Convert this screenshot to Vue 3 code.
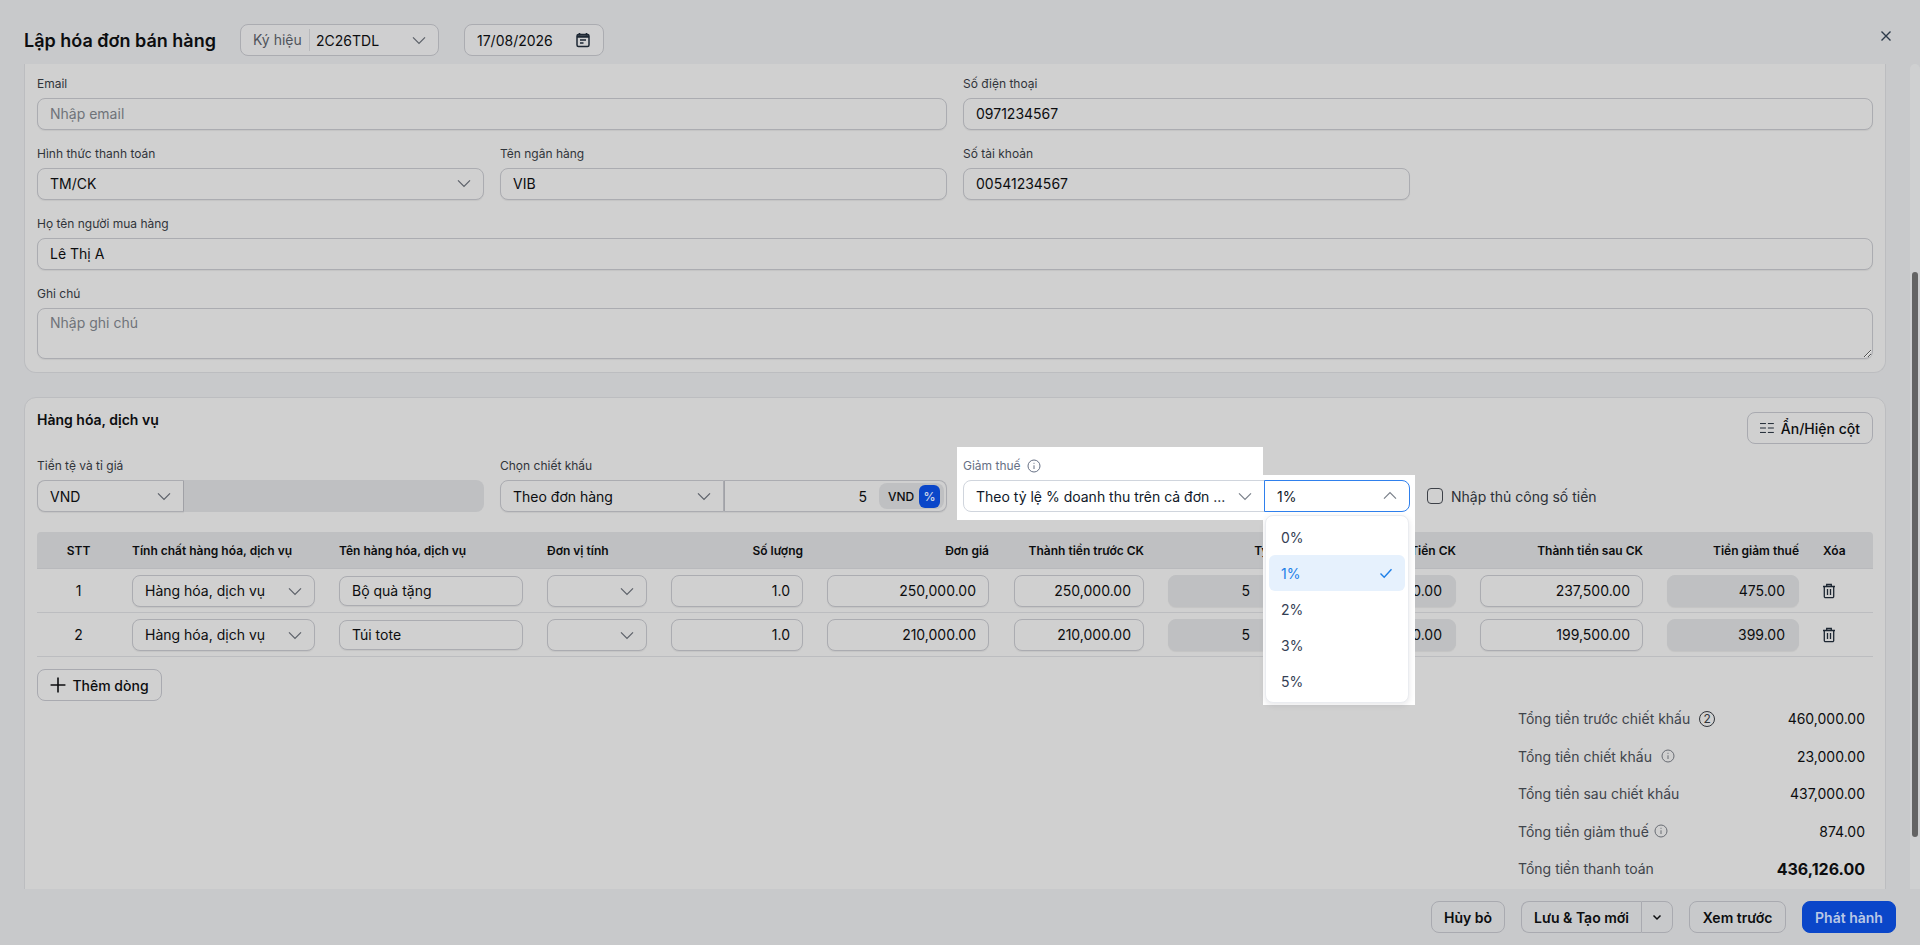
<script setup>
const rows = [
  { id: 1, name: "Bộ quà tặng", qty: "1.0", price: "250,000.00", before: "250,000.00", rate: "5", discount: "12,500.00", after: "237,500.00", tax: "475.00" },
  { id: 2, name: "Túi tote", qty: "1.0", price: "210,000.00", before: "210,000.00", rate: "5", discount: "10,500.00", after: "199,500.00", tax: "399.00" },
];

const options = ["0%", "1%", "2%", "3%", "5%"];
</script>

<template>
  <div class="page">
    <header class="top">
      <h1 class="title">Lập hóa đơn bán hàng</h1>
      <div class="symbol">
        <span class="symbol-label">Ký hiệu</span>
        <span class="symbol-value">2C26TDL</span>
        <svg class="chev" viewBox="0 0 12 12"><path d="M1.5 4l4.5 4.500L10.500 4" /></svg>
      </div>
      <div class="date">
        <span>17/08/2026</span>
        <svg class="calendar" viewBox="0 0 16 16">
          <path d="M4.5 1v2.500M11.500 1v2.500" stroke-width="1.6" />
          <rect x="2" y="2.5" width="12" height="12" rx="1.5" stroke-width="1.5" />
          <path d="M2 4.500h12" stroke-width="2.5" />
          <path d="M5 8h6M5 11h3.500" stroke-width="1.3" />
        </svg>
      </div>
      <svg class="close" viewBox="0 0 20 20"><path d="M5.500 5.500l9 9M14.500 5.500l-9 9" /></svg>
    </header>

    <div class="body">
      <main class="main">
        <section class="card first">
          <div class="form-grid">
            <div class="field span2">
              <label>Email</label>
              <input class="ctl" placeholder="Nhập email" />
            </div>
            <div class="field span2">
              <label>Số điện thoại</label>
              <input class="ctl" value="0971234567" />
            </div>
            <div class="field">
              <label>Hình thức thanh toán</label>
              <div class="ctl select">
                <span>TM/CK</span>
                <svg class="chev" viewBox="0 0 12 12"><path d="M1.500 4l4.500 4.500L10.500 4" /></svg>
              </div>
            </div>
            <div class="field">
              <label>Tên ngân hàng</label>
              <input class="ctl" value="VIB" />
            </div>
            <div class="field">
              <label>Số tài khoản</label>
              <input class="ctl" value="00541234567" />
            </div>
            <div class="blank"></div>
            <div class="field span4">
              <label>Họ tên người mua hàng</label>
              <input class="ctl" value="Lê Thị A" />
            </div>
            <div class="field span4">
              <label>Ghi chú</label>
              <textarea class="ctl note" placeholder="Nhập ghi chú"></textarea>
            </div>
          </div>
        </section>

        <section class="card second">
          <div class="card-head">
            <h2>Hàng hóa, dịch vụ</h2>
            <button class="btn columns">
              <svg class="columns-icon" viewBox="0 0 14 12">
                <path d="M0 1.500h6M0 6h6M0 10.500h6M8 1.500h6M8 6h6M8 10.500h6" />
              </svg>
              Ẩn/Hiện cột
            </button>
          </div>

          <div class="filters">
            <div class="field">
              <label>Tiền tệ và tỉ giá</label>
              <div class="joined">
                <div class="ctl select currency">
                  <span>VND</span>
                  <svg class="chev" viewBox="0 0 12 12"><path d="M1.500 4l4.500 4.500L10.500 4" /></svg>
                </div>
                <div class="rate-off"></div>
              </div>
            </div>
            <div class="field">
              <label>Chọn chiết khấu</label>
              <div class="joined">
                <div class="ctl select discount-type">
                  <span>Theo đơn hàng</span>
                  <svg class="chev" viewBox="0 0 12 12"><path d="M1.500 4l4.500 4.500L10.500 4" /></svg>
                </div>
                <div class="discount-box">
                  <span class="discount-value">5</span>
                  <div class="unit-toggle">
                    <span class="unit">VND</span>
                    <span class="unit on">%</span>
                  </div>
                </div>
              </div>
            </div>
            <div class="field tax-field">
              <div class="spot spot-label"></div>
              <div class="spot spot-menu"></div>
              <label class="tax-label">
                Giảm thuế
                <svg class="info" viewBox="0 0 14 14">
                  <circle cx="7" cy="7" r="6" />
                  <path d="M7 6.300v3.700M7 3.800v1" />
                </svg>
              </label>
              <div class="joined tax-controls">
                <div class="ctl select tax-type">
                  <span>Theo tỷ lệ % doanh thu trên cả đơn ...</span>
                  <svg class="chev" viewBox="0 0 12 12"><path d="M1.500 4l4.500 4.500L10.500 4" /></svg>
                </div>
                <div class="ctl select tax-rate">
                  <span>1%</span>
                  <svg class="chev" viewBox="0 0 12 12"><path d="M1.500 8l4.500-4.500L10.500 8" /></svg>
                </div>
              </div>
              <ul class="menu">
                <li v-for="opt in options" :key="opt" class="option" :class="{ active: opt === '1%' }">
                  {{ opt }}
                  <svg v-if="opt === '1%'" class="tick" viewBox="0 0 14 14"><path d="M1.500 7.500l3.700 3.700L12.500 3.300" /></svg>
                </li>
              </ul>
            </div>
            <div class="manual">
              <span class="check"></span>
              <span>Nhập thủ công số tiền</span>
            </div>
          </div>

          <div class="table">
            <div class="t-row t-head">
              <div class="center">STT</div>
              <div>Tính chất hàng hóa, dịch vụ</div>
              <div>Tên hàng hóa, dịch vụ</div>
              <div>Đơn vị tính</div>
              <div class="right">Số lượng</div>
              <div class="right">Đơn giá</div>
              <div class="right">Thành tiền trước CK</div>
              <div class="right rate-head">Tỷ lệ CK</div>
              <div class="right">Tiền CK</div>
              <div class="right">Thành tiền sau CK</div>
              <div class="right">Tiền giảm thuế</div>
              <div>Xóa</div>
            </div>
            <div v-for="row in rows" :key="row.id" class="t-row t-body">
              <div class="center">{{ row.id }}</div>
              <div>
                <div class="ctl select">
                  <span>Hàng hóa, dịch vụ</span>
                  <svg class="chev" viewBox="0 0 12 12"><path d="M1.500 4l4.500 4.500L10.500 4" /></svg>
                </div>
              </div>
              <div><input class="ctl slim" :value="row.name" /></div>
              <div>
                <div class="ctl select">
                  <span></span>
                  <svg class="chev" viewBox="0 0 12 12"><path d="M1.500 4l4.500 4.500L10.500 4" /></svg>
                </div>
              </div>
              <div><input class="ctl num" :value="row.qty" /></div>
              <div><input class="ctl num" :value="row.price" /></div>
              <div><input class="ctl num" :value="row.before" /></div>
              <div><div class="ctl off rate-cell">{{ row.rate }}</div></div>
              <div><div class="ctl off">{{ row.discount }}</div></div>
              <div><input class="ctl num" :value="row.after" /></div>
              <div><div class="ctl off">{{ row.tax }}</div></div>
              <div>
                <svg class="trash" viewBox="0 0 16 16">
                  <path d="M5.700 3V1.500h4.600V3M2 3.500h12" stroke-width="1.3" />
                  <path d="M3.300 3.500v10a1.200 1.200 0 0 0 1.200 1.200h7a1.200 1.200 0 0 0 1.200-1.200v-10" stroke-width="1.3" />
                  <path d="M6.500 6v6M9.500 6v6" stroke-width="1.3" />
                </svg>
              </div>
            </div>
          </div>

          <button class="btn add">
            <svg class="plus" viewBox="0 0 14 14"><path d="M7 0.500v13M0.500 7h13" /></svg>
            Thêm dòng
          </button>

          <div class="summary">
            <div class="sum-row">
              <span class="sum-label">Tổng tiền trước chiết khấu <span class="badge">2</span></span>
              <span>460,000.00</span>
            </div>
            <div class="sum-row">
              <span class="sum-label">Tổng tiền chiết khấu
                <svg class="info sum-info" viewBox="0 0 14 14"><circle cx="7" cy="7" r="6" /><path d="M7 6.300v3.700M7 3.800v1" /></svg>
              </span>
              <span>23,000.00</span>
            </div>
            <div class="sum-row">
              <span class="sum-label">Tổng tiền sau chiết khấu</span>
              <span>437,000.00</span>
            </div>
            <div class="sum-row">
              <span class="sum-label tight">Tổng tiền giảm thuế
                <svg class="info sum-info" viewBox="0 0 14 14"><circle cx="7" cy="7" r="6" /><path d="M7 6.300v3.700M7 3.800v1" /></svg>
              </span>
              <span>874.00</span>
            </div>
            <div class="sum-row total">
              <span class="sum-label">Tổng tiền thanh toán</span>
              <span class="total-value">436,126.00</span>
            </div>
          </div>
        </section>
      </main>
      <div class="scrollbar"><div class="thumb"></div></div>
    </div>

    <footer class="bottom">
      <button class="btn cancel">Hủy bỏ</button>
      <div class="btn-group">
        <button class="btn save">Lưu &amp; Tạo mới</button>
        <button class="btn caret">
          <svg viewBox="0 0 12 12"><path d="M2.500 4.500L6 8l3.500-3.500" /></svg>
        </button>
      </div>
      <button class="btn preview">Xem trước</button>
      <button class="btn primary">Phát hành</button>
    </footer>
  </div>
</template>

<style>
html,
body {
  margin: 0;
  overflow: hidden;
}
</style>

<style scoped>
.page {
  width: 1920px;
  height: 945px;
  display: flex;
  flex-direction: column;
  overflow: hidden;
  background: #c8c9cb;
  color: #0c0d0f;
  font-family: Inter, "Noto Sans", sans-serif;
  font-size: 14px;
}

.top {
  height: 64px;
  box-sizing: border-box;
  padding: 24px 24px 8px;
  display: flex;
  align-items: center;
  flex-shrink: 0;
}

.title {
  margin: 0 24px 0 0;
  font-size: 18px;
  font-weight: 600;
  width: 192px;
  white-space: nowrap;
}

.symbol,
.date {
  height: 32px;
  box-sizing: border-box;
  border: 1px solid #abacb1;
  border-radius: 8px;
  display: flex;
  align-items: center;
  background: #cfcfd0;
}

.symbol {
  width: 199px;
  padding: 0 11px 0 12px;
}

.symbol-label {
  width: 56px;
  color: #50545b;
  border-right: 1px solid #b8b9bc;
  line-height: 22px;
  flex-shrink: 0;
}

.symbol-value {
  padding-left: 6px;
}

.symbol .chev {
  margin-left: auto;
}

.date {
  width: 140px;
  margin-left: 25px;
  padding: 0 12px;
  justify-content: space-between;
}

.calendar {
  width: 16px;
  height: 16px;
  fill: none;
  stroke: #1d2733;
}

.close {
  width: 20px;
  height: 20px;
  margin-left: auto;
  margin-top: -8px;
  fill: none;
  stroke: #2c3a4a;
  stroke-width: 1.4;
}

.chev {
  width: 16px;
  height: 16px;
  fill: none;
  stroke: #5b6068;
  stroke-width: 0.9;
  flex-shrink: 0;
}

.body {
  flex: 1;
  min-height: 0;
  display: flex;
  overflow: hidden;
}

.main {
  width: 1862px;
  margin-left: 24px;
  flex-shrink: 0;
}

.card {
  box-sizing: border-box;
  background: #d0d0d0;
  border: 1px solid #bcbdc0;
  border-radius: 12px;
  padding: 12px;
}

.first {
  height: 309px;
  border-top: 0;
  border-radius: 0 0 12px 12px;
  padding-top: 10px;
}

.second {
  margin-top: 24px;
  height: 600px;
}

.form-grid,
.filters {
  display: grid;
  grid-template-columns: repeat(4, 447px);
  column-gap: 16px;
  row-gap: 14px;
}

.span2 {
  grid-column: span 2;
}

.span4 {
  grid-column: span 4;
}

.field {
  display: flex;
  flex-direction: column;
  min-width: 0;
}

.field label {
  font-size: 12px;
  line-height: 20px;
  margin-bottom: 4px;
  color: #30343a;
}

.ctl {
  box-sizing: border-box;
  width: 100%;
  height: 32px;
  padding: 0 12px;
  border: 1px solid #abacb1;
  border-radius: 8px;
  background: #d0d0d0;
  box-shadow: 0 1px 1px rgba(0, 0, 0, 0.06);
  font-family: inherit;
  font-size: 14px;
  color: #0c0d0f;
  outline: none;
  display: flex;
  align-items: center;
}

.first .ctl {
  padding-bottom: 2px;
}

.ctl::placeholder {
  color: #6f7379;
  opacity: 1;
}

.first .note {
  display: block;
  height: 51px;
  padding: 4px 12px;
  line-height: 20px;
}

.select {
  justify-content: space-between;
  padding-right: 11px;
}

.joined {
  display: flex;
  height: 32px;
}

.currency {
  width: 147px;
  border-radius: 8px 0 0 8px;
  border-right-color: #a0a1a6;
  flex-shrink: 0;
}

.rate-off {
  flex: 1;
  background: #bfc0c2;
  border-radius: 0 8px 8px 0;
}

.discount-type {
  width: 224px;
  flex-shrink: 0;
  border-radius: 8px 0 0 8px;
}

.discount-box {
  flex: 1;
  box-sizing: border-box;
  border: 1px solid #abacb1;
  border-left-color: #a0a1a6;
  border-radius: 0 8px 8px 0;
  display: flex;
  align-items: center;
  justify-content: flex-end;
  padding-right: 2px;
  box-shadow: 0 1px 1px rgba(0, 0, 0, 0.06);
}

.discount-value {
  margin-right: 12px;
}

.unit-toggle {
  width: 65px;
  height: 26px;
  box-sizing: border-box;
  border-radius: 8px;
  background: #bfc0c2;
  display: flex;
  align-items: center;
  justify-content: space-between;
  padding: 0 4px 0 9px;
}

.unit {
  font-size: 12px;
  font-weight: 500;
}

.unit.on {
  width: 21px;
  height: 23px;
  border-radius: 6px;
  background: #0a46c9;
  color: #c6d2e8;
  display: flex;
  align-items: center;
  justify-content: center;
  font-weight: 600;
}

.tax-field {
  position: relative;
  z-index: 2;
}

.spot {
  position: absolute;
  background: #fff;
}

.spot-label {
  left: -6px;
  top: -9px;
  width: 306px;
  height: 73px;
}

.spot-menu {
  left: 300px;
  top: 19px;
  width: 152px;
  height: 230px;
}

.field .tax-label {
  position: relative;
  display: flex;
  align-items: center;
  gap: 6px;
  color: #667085;
}

.info {
  width: 14px;
  height: 14px;
  fill: none;
  stroke: #667085;
  stroke-width: 1;
  flex-shrink: 0;
}

.tax-controls {
  position: relative;
}

.tax-type {
  width: 302px;
  flex-shrink: 0;
  background: #fff;
  border-color: #d0d5dd;
  border-radius: 8px 0 0 8px;
  color: #101828;
  box-shadow: none;
}

.tax-type span {
  white-space: nowrap;
}

.tax-type .chev,
.tax-rate .chev {
  stroke: #7a808a;
}

.tax-rate {
  flex: 1;
  margin-left: -1px;
  background: #fff;
  border-color: #2f80ed;
  border-radius: 0 8px 8px 0;
  color: #101828;
  box-shadow: none;
}

.menu {
  position: absolute;
  left: 302px;
  top: 59px;
  width: 144px;
  height: 188px;
  box-sizing: border-box;
  margin: 0;
  padding: 3px;
  list-style: none;
  background: #fff;
  border: 1px solid #eaecf0;
  border-radius: 8px;
  box-shadow: 0 2px 6px rgba(16, 24, 40, 0.1);
}

.option {
  height: 36px;
  padding: 0 12px;
  display: flex;
  align-items: center;
  justify-content: space-between;
  border-radius: 6px;
  color: #344054;
}

.option.active {
  background: #e6f1fd;
  color: #1d7fe8;
}

.tick {
  width: 14px;
  height: 14px;
  fill: none;
  stroke: #1d7fe8;
  stroke-width: 1.4;
}

.manual {
  display: flex;
  align-items: center;
  gap: 8px;
  align-self: end;
  height: 32px;
  color: #2c3037;
  position: relative;
  z-index: 3;
  margin-left: 1px;
}

.check {
  width: 16px;
  height: 16px;
  box-sizing: border-box;
  border: 1px solid #3d4148;
  border-radius: 4px;
}

.card-head {
  display: flex;
  justify-content: space-between;
  align-items: flex-start;
  height: 46px;
}

.card-head h2 {
  margin: 0;
  font-size: 14px;
  line-height: 20px;
  font-weight: 600;
}

.btn {
  height: 32px;
  box-sizing: border-box;
  padding: 0 12px;
  border: 1px solid #a9aab0;
  border-radius: 8px;
  background: transparent;
  color: #0c0d0f;
  font-family: inherit;
  font-size: 14px;
  font-weight: 600;
  display: inline-flex;
  align-items: center;
  justify-content: center;
  white-space: nowrap;
}

.columns {
  margin-top: 2px;
  width: 126px;
  gap: 7px;
  font-weight: 500;
}

.columns-icon {
  width: 14px;
  height: 12px;
  fill: none;
  stroke: #1d2733;
  stroke-width: 1;
}

.table {
  margin-top: 20px;
}

.t-row {
  display: grid;
  grid-template-columns: 83px 207px 208px 124px 156px 187px 154px 161px 151px 187px 156px 62px;
  align-items: center;
  box-sizing: border-box;
}

.t-row > div {
  box-sizing: border-box;
  padding: 0 12px;
  min-width: 0;
}

.t-row > div:nth-child(6) {
  padding-right: 13px;
}

.t-head {
  height: 37px;
  background: #bfc0c2;
  border-radius: 4px 4px 0 0;
  border-bottom: 1px solid #b8b9bc;
  font-size: 12px;
  font-weight: 600;
  white-space: nowrap;
}

.t-row > .rate-head {
  padding-right: 15px;
}

.t-body {
  height: 44px;
  border-bottom: 1px solid #bcbdc0;
}

.center {
  text-align: center;
}

.right {
  text-align: right;
}

.slim {
  height: 30px;
}

.num {
  text-align: right;
}

.off {
  background: #bfc0c2;
  border-color: #bfc0c2;
  justify-content: flex-end;
  padding-right: 13px;
}

.rate-cell {
  padding-right: 54px;
}

.trash {
  display: block;
  width: 16px;
  height: 16px;
  margin-left: -2px;
  fill: none;
  stroke: #1d2733;
}

.add {
  margin-top: 12px;
  width: 125px;
  gap: 6px;
  padding: 0 12px;
  font-weight: 500;
}

.plus {
  width: 16px;
  height: 16px;
  fill: none;
  stroke: #0c0d0f;
  stroke-width: 1.4;
}

.summary {
  width: 347px;
  margin-left: auto;
  margin-right: 8px;
  margin-top: -1px;
}

.sum-row {
  height: 37.5px;
  display: flex;
  align-items: center;
  justify-content: space-between;
}

.sum-label {
  display: flex;
  align-items: center;
  gap: 9px;
  color: #3f444b;
}

.sum-label.tight {
  gap: 5px;
}

.badge {
  width: 16px;
  height: 16px;
  box-sizing: border-box;
  border: 1px solid #30343a;
  border-radius: 50%;
  font-size: 12px;
  line-height: 14px;
  text-align: center;
  color: #30343a;
}

.total-value {
  font-size: 16px;
  font-weight: 700;
}

.sum-info {
  stroke: #686c73;
}

.scrollbar {
  width: 10px;
  margin-left: auto;
  background: #cfd0d1;
  border-radius: 6px 6px 0 0;
  position: relative;
}

.thumb {
  position: absolute;
  left: 2px;
  top: 208px;
  width: 6px;
  height: 565px;
  border-radius: 3px;
  background: #646464;
}

.bottom {
  height: 56px;
  box-sizing: border-box;
  padding: 12px 24px;
  display: flex;
  justify-content: flex-end;
  gap: 16px;
  flex-shrink: 0;
}

.btn-group {
  display: flex;
}

.cancel {
  width: 74px;
}

.preview {
  width: 97px;
}

.save {
  border-radius: 8px 0 0 8px;
  border-right: 0;
  width: 120px;
  padding: 0;
}

.caret {
  width: 32px;
  padding: 0;
  border-radius: 0 8px 8px 0;
}

.caret svg {
  width: 12px;
  height: 12px;
  fill: none;
  stroke: #0c0d0f;
  stroke-width: 1.5;
}

.primary {
  width: 94px;
  background: #0a46c9;
  border-color: #0a46c9;
  color: #b9c8e6;
}
</style>
